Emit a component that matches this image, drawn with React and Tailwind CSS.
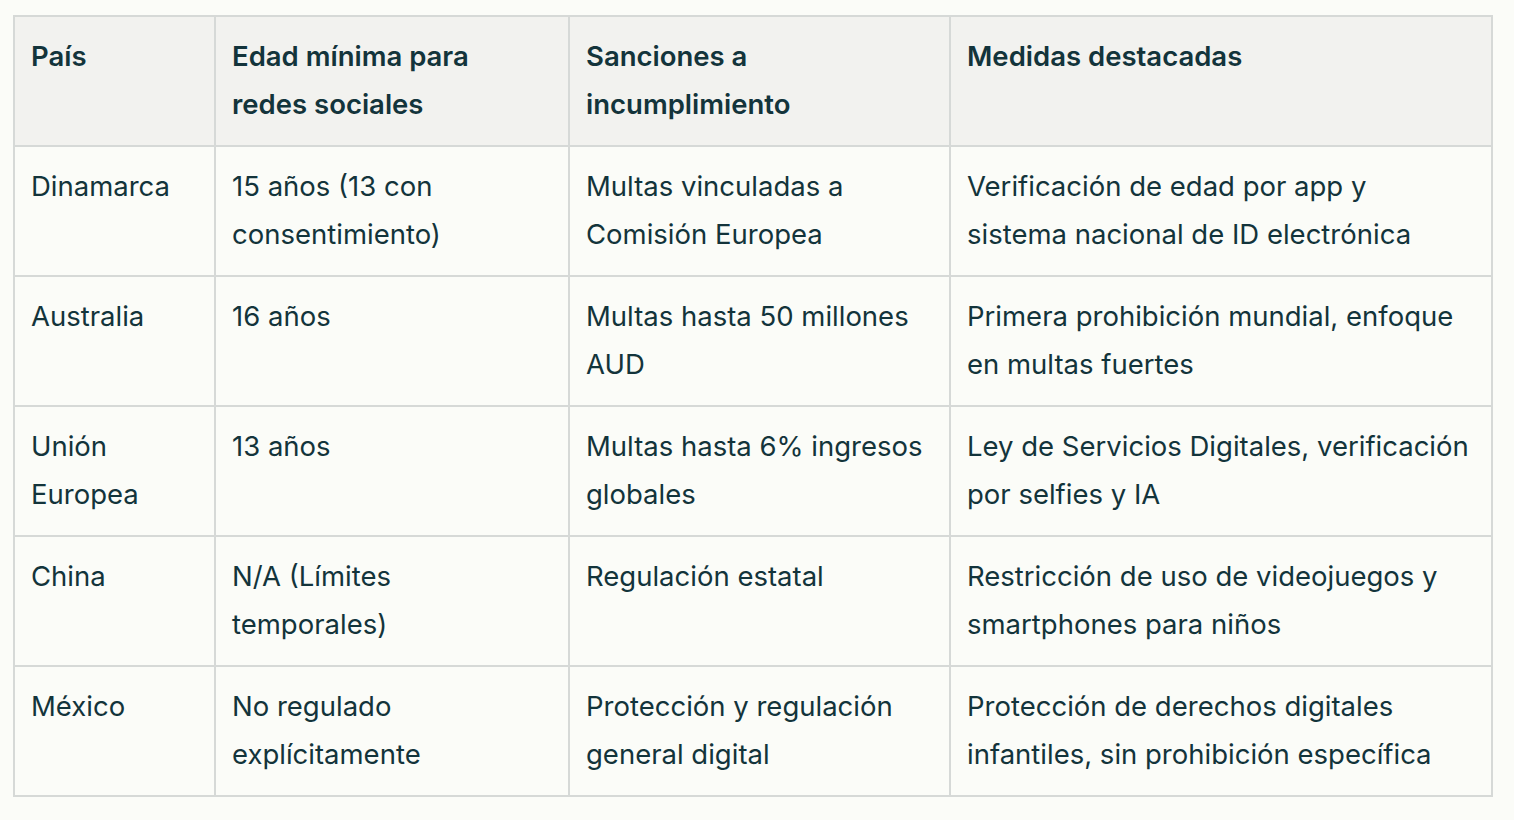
const rows = [
  ["Dinamarca", "15 años (13 con consentimiento)", "Multas vinculadas a Comisión Europea", "Verificación de edad por app y sistema nacional de ID electrónica"],
  ["Australia", "16 años", "Multas hasta 50 millones AUD", "Primera prohibición mundial, enfoque en multas fuertes"],
  ["Unión Europea", "13 años", "Multas hasta 6% ingresos globales", "Ley de Servicios Digitales, verificación por selfies y IA"],
  ["China", "N/A (Límites temporales)", "Regulación estatal", "Restricción de uso de videojuegos y smartphones para niños"],
  ["México", "No regulado explícitamente", "Protección y regulación general digital", "Protección de derechos digitales infantiles, sin prohibición específica"],
];

const headers = ["País", "Edad mínima para redes sociales", "Sanciones a incumplimiento", "Medidas destacadas"];

export default function App() {
  return (
    <div className="min-h-screen bg-[#fbfcf8] pt-[15px] pl-[13px] pr-[21px] font-['Inter',sans-serif] text-[#13343b]">
      <table className="w-[1478px] table-fixed border-collapse border-2 border-[#d6d9d7] text-[27.5px] leading-[48px]">
        <colgroup>
          <col className="w-[201px]" />
          <col className="w-[354px]" />
          <col className="w-[381px]" />
          <col className="w-[542px]" />
        </colgroup>
        <thead>
          <tr className="bg-[#f2f2ef]">
            {headers.map((h) => (
              <th key={h} className="h-[130px] border-2 border-[#d6d9d7] pl-4 pr-5 pt-[15px] pb-4 text-left align-top font-semibold">
                {h}
              </th>
            ))}
          </tr>
        </thead>
        <tbody>
          {rows.map((r) => (
            <tr key={r[0]}>
              {r.map((c, i) => (
                <td key={i} className="h-[130px] border-2 border-[#d6d9d7] pl-4 pr-5 pt-[15px] pb-4 align-top">
                  {c}
                </td>
              ))}
            </tr>
          ))}
        </tbody>
      </table>
    </div>
  );
}
